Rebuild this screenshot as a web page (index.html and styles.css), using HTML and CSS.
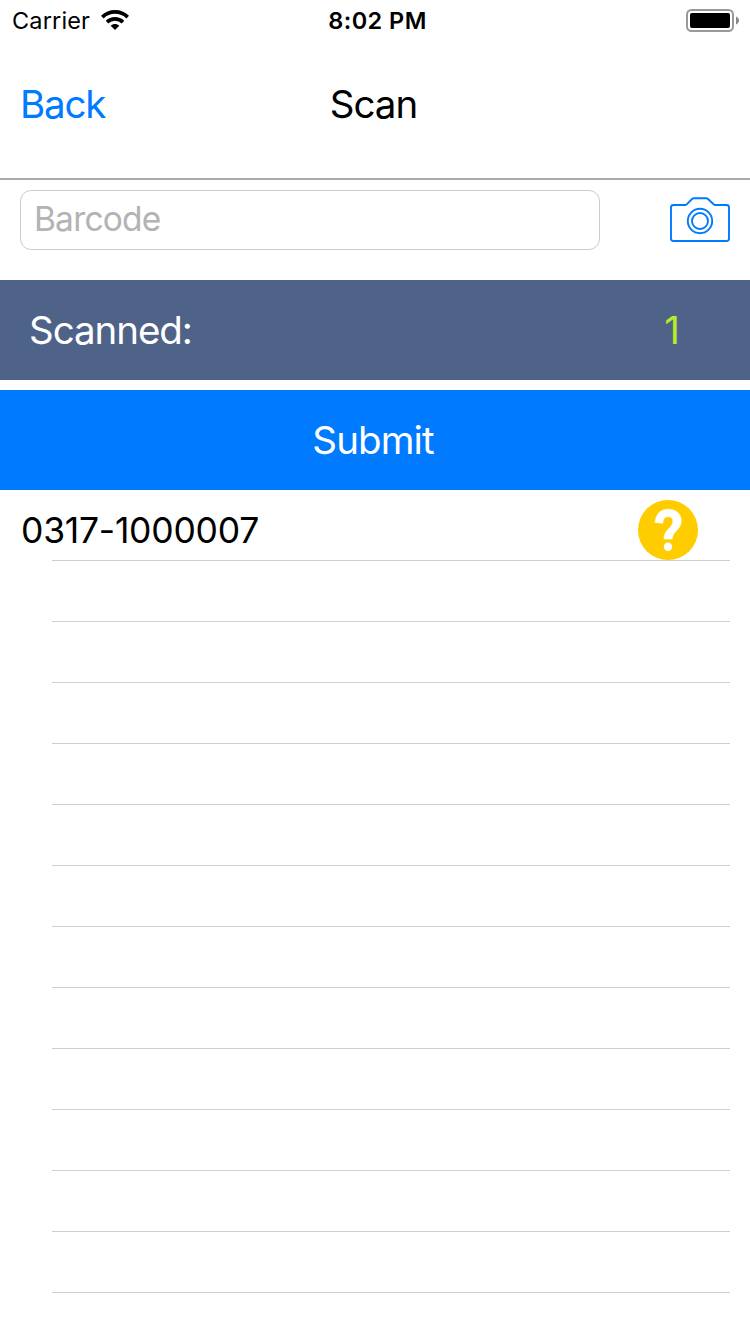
FILE: index.html
```html
<!DOCTYPE html>
<html lang="en">
<head>
<meta charset="utf-8">
<title>Scan</title>
<link rel="stylesheet" href="styles.css">
</head>
<body>
<div class="status">
  <div class="carrier"><span class="carrier-name">Carrier</span>
    <svg class="wifi" width="28" height="20" viewBox="0 0 28 20"><g fill="none" stroke="#000" stroke-width="3.7"><path d="M1.3 7.1C8.4.2 19.6.2 26.7 7.1"/><path d="M6 12.1c4.6-4.2 11.400-4.200 16 0"/></g><path d="M14 20l-4.300-4.300c2.500-2.300 6.100-2.300 8.600 0z"/></svg>
  </div>
  <span class="clock">8:02 PM</span>
  <svg class="battery" width="54" height="24" viewBox="0 0 54 24"><rect x="1" y="1" width="46" height="21" rx="4.500" fill="none" stroke="#999" stroke-width="2"/><rect x="4" y="4" width="40" height="15" rx="2"/><path d="M50 7.500c4 1.500 4 6.500 0 8z" fill="#888"/></svg>
</div>
<header class="nav">
  <a class="back">Back</a>
  <h1 class="title">Scan</h1>
</header>
<main>
  <div class="entry">
    <input class="barcode" type="text" placeholder="Barcode">
    <svg class="camera" width="60" height="46" viewBox="0 0 60 46" fill="none" stroke="#007aff" stroke-width="1.900"><path d="M3.500 9h11.500q1 0 1.700-.7l5.300-5.300q.8-.7 1.700-.7h12.600q1 0 1.700.7l5.600 5.300q.8.7 1.800.7h11.100q2.500 0 2.500 2.500v31q0 2.500-2.500 2.500h-53q-2.500 0-2.500-2.500v-31q0-2.500 2.500-2.500z"/><circle cx="30" cy="25" r="12.200"/><circle cx="30" cy="25" r="8"/></svg>
  </div>
  <div class="count"><span class="count-label">Scanned:</span><span class="count-value">1</span></div>
  <button class="submit"><span class="submit-label">Submit</span></button>
  <ul class="list">
    <li class="row"><span class="code">0317-1000007</span>
      <svg class="help" width="60" height="60" viewBox="0 0 60 60"><circle cx="30" cy="30" r="30" fill="#fc0"/><path d="M17 22.500C18 13.500 23 9.200 30 9.200C37.500 9.200 43.300 13.500 43.300 20.500C43.300 30 34.200 31.500 34.200 39H26C26 29 35 28 35 21C35 18.200 33 16.800 30.200 16.800C26.800 16.800 25.200 18.800 24.700 23.300z" fill="#fff" stroke="#fff" stroke-width=".6" stroke-linejoin="round"/><circle cx="30" cy="46.800" r="4.200" fill="#fff"/></svg>
    </li>
    <li class="row"></li><li class="row"></li><li class="row"></li><li class="row"></li>
    <li class="row"></li><li class="row"></li><li class="row"></li><li class="row"></li>
    <li class="row"></li><li class="row"></li><li class="row"></li><li class="row"></li>
  </ul>
</main>
</body>
</html>
```
FILE: styles.css
```css
* { box-sizing: border-box; }
body {
  margin: 0;
  height: 1334px;
  overflow: hidden;
  background: #fff;
  color: #000;
  font-family: Inter, "Liberation Sans", sans-serif;
  font-size: 38.5px;
}
.status {
  display: grid;
  grid-template-columns: 1fr auto 1fr;
  height: 40px;
  padding: 0 10px 0 12px;
  font-size: 23.5px;
  line-height: 41px;
}
.carrier { display: flex; align-items: center; gap: 11px; }
.carrier-name { letter-spacing: 0.15px; }
.wifi { margin-bottom: 2px; }
.clock { padding-left: 3px; font-weight: 600; letter-spacing: 0.45px; }
.battery { justify-self: end; margin-top: 9px; }
.nav {
  display: grid;
  grid-template-columns: 1fr auto 1fr;
  height: 140px;
  padding: 0 23px 0 20px;
  border-bottom: 2px solid #aaa;
  line-height: 129px;
}
.back { color: #007aff; letter-spacing: -1.2px; }
.title { margin: 0; font-size: inherit; font-weight: 400; letter-spacing: -1px; }
.entry {
  display: flex;
  justify-content: space-between;
  height: 100px;
  padding: 10px 20px 0;
}
.barcode {
  width: 580px;
  height: 60px;
  padding: 0 14px 3px 13px;
  border: 1px solid #ccc;
  border-radius: 11px;
  background: #fff;
  font: 33.500px Inter, "Liberation Sans", sans-serif;
  letter-spacing: -0.8px;
}
.barcode::placeholder { color: #b3b3b3; opacity: 1; }
.camera { margin-top: 6px; }
.count {
  display: flex;
  justify-content: space-between;
  height: 100px;
  padding: 0 70px 0 29px;
  background: #4f6389;
  color: #fff;
  line-height: 101px;
}
.count-label { letter-spacing: -1.05px; }
.count-value { color: #b5ec2c; }
.submit {
  display: block;
  width: 100%;
  height: 100px;
  margin: 10px 0;
  padding: 0 4px 0 0;
  border: 0;
  background: #007aff;
  color: #fff;
  font: 38.5px/101px Inter, "Liberation Sans", sans-serif;
  letter-spacing: -0.9px;
}
.list { margin: 0; padding: 0 20px; list-style: none; }
.row {
  display: flex;
  justify-content: space-between;
  height: 61px;
  padding: 0 32px 0 1px;
  background: linear-gradient(#cfcddc, #cfcddc) 32px 100% / 678px 1px no-repeat;
}
.code { font-size: 35.500px; line-height: 61px; letter-spacing: -0.25px; }
```
